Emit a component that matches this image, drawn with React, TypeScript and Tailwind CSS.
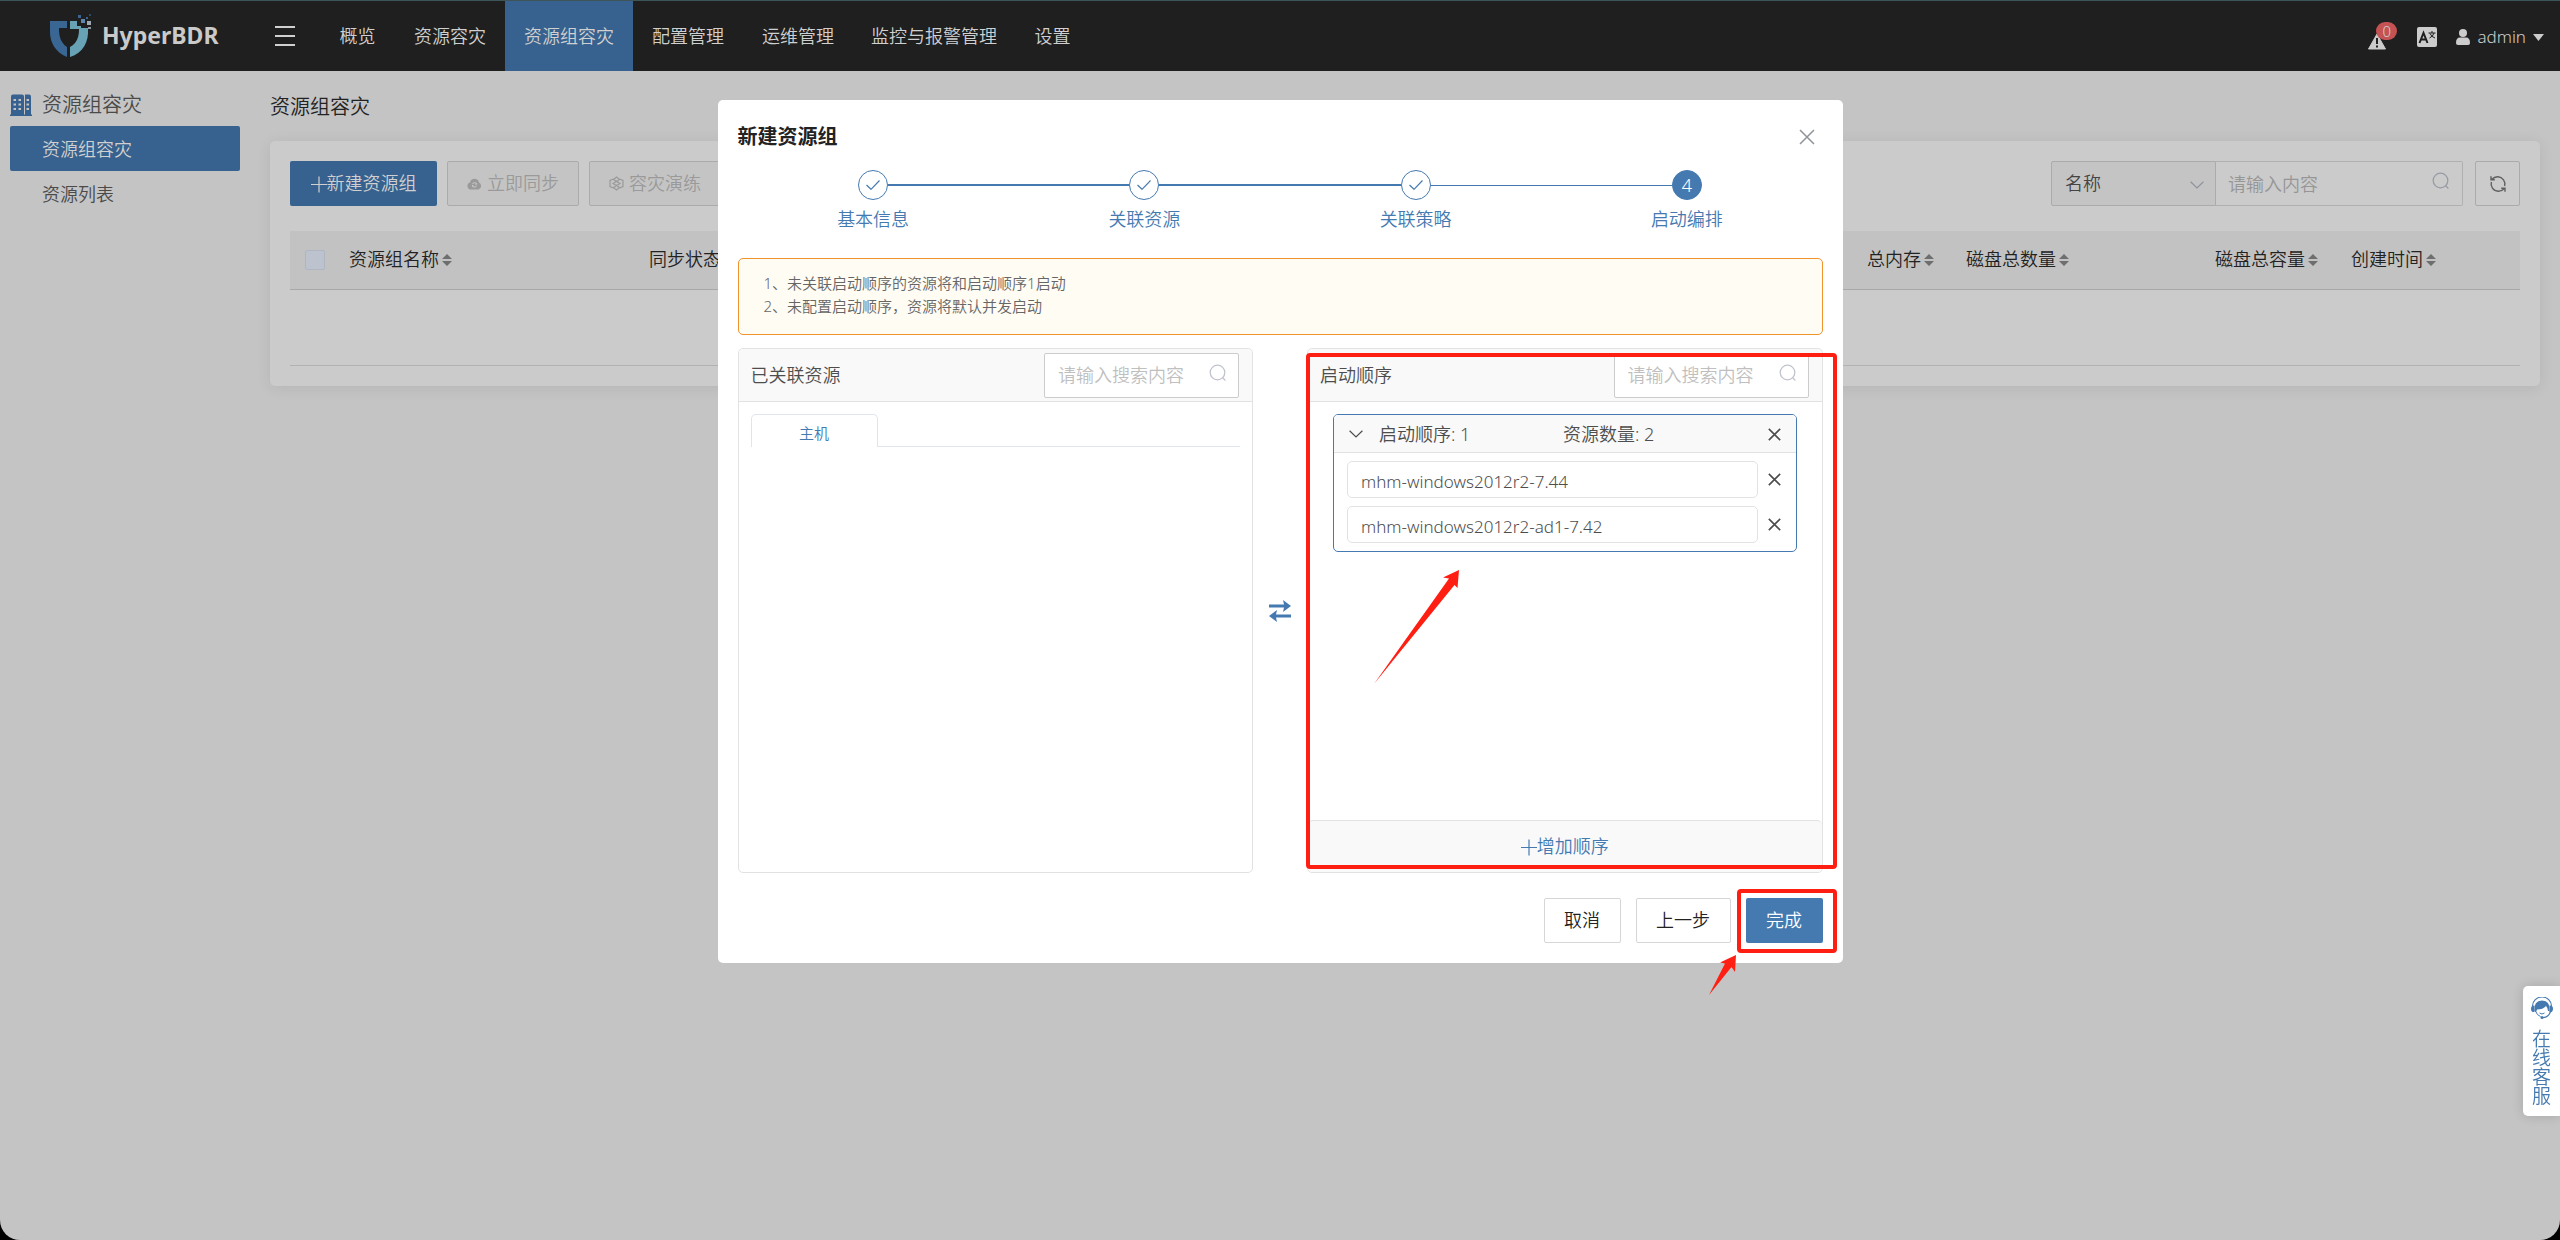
import React, { useState } from 'react';

const NAV_ITEMS = [
  { label: '概览', width: 'w-[75px]' },
  { label: '资源容灾', width: 'w-[110px]' },
  { label: '资源组容灾', width: 'w-[128px]', active: true },
  { label: '配置管理', width: 'w-[110px]' },
  { label: '运维管理', width: 'w-[110px]' },
  { label: '监控与报警管理', width: 'w-[162px]' },
  { label: '设置', width: 'w-[75px]' },
];

const STEPS = ['基本信息', '关联资源', '关联策略', '启动编排'];

const RESOURCES = ['mhm-windows2012r2-7.44', 'mhm-windows2012r2-ad1-7.42'];

interface IconProps {
  className?: string;
}

const LogoMark = () => (
  <svg className="h-[44px] w-[42px]" viewBox="0 0 42 44">
    <path d="M0 7H17V14H9C9 23 11 29 17 33V43C5 38 0 28 0 18Z" fill="#3a6694" />
    <path d="M20 7H27V12H31V14H38C39 28 33 39 20 43V33C27 29 29 23 29 15H20Z" fill="#68a3b5" />
    <path d="M31 5h4v4h-4z" fill="#5f87ad" />
    <path d="M28 1h3v3h-3z" fill="#3a6694" />
    <path d="M37 7h4v4h-4z" fill="#9fa9b3" />
    <path d="M36 3h2v2h-2z" fill="#3a6694" />
    <path d="M39 0h2v2h-2z" fill="#2c4a6a" />
    <path d="M38 13h3v2h-3z" fill="#8c979f" />
  </svg>
);

const SearchIcon = ({ className = '' }: IconProps) => (
  <svg className={`h-[18px] w-[18px] ${className}`} viewBox="0 0 18 18" fill="none" stroke="currentColor" strokeWidth="1.3">
    <circle cx="8.5" cy="8.5" r="7.3" />
    <path d="M13.8 13.8L16.4 16.6" />
  </svg>
);

const CloseIcon = ({ className = '' }: IconProps) => (
  <svg className={className} viewBox="0 0 16 16" fill="none" stroke="currentColor">
    <path d="M1 1L15 15M15 1L1 15" />
  </svg>
);

const ChevronIcon = ({ className = '' }: IconProps) => (
  <svg className={`h-[8px] w-[14px] ${className}`} viewBox="0 0 14 8" fill="none" stroke="currentColor" strokeWidth="1.2">
    <path d="M0.6 0.8L7 7L13.4 0.8" />
  </svg>
);

const PlusIcon = () => (
  <svg className="h-[18px] w-[16px]" viewBox="0 0 16 18" fill="none" stroke="currentColor" strokeWidth="1.2">
    <path d="M0 9.5H16M8 1.5V17.5" />
  </svg>
);

const SortIcon = () => (
  <svg className="h-[12px] w-[10px]" viewBox="0 0 10 12" fill="#6e6e6e">
    <path d="M0 5L5 0L10 5ZM0 7L5 12L10 7Z" />
  </svg>
);

const BuildingIcon = () => (
  <svg className="h-[22px] w-[22px]" viewBox="0 0 22 22">
    <path d="M0 20.5H1V2.5Q1 0.5 3 0.5H12Q14 0.5 14 2.5V20.5H15V0.5H19Q21 0.5 21 2.5V20.5H22V22H0Z" fill="#37618e" />
    <path
      d="M3.5 5h2.5v2h-2.5zM8.5 5h2.5v2h-2.5zM3.5 9.5h2.5v2h-2.5zM8.5 9.5h2.5v2h-2.5zM3.5 14h2.5v2h-2.5zM8.5 14h2.5v2h-2.5zM16.5 5h2.5v2h-2.5zM16.5 9.5h2.5v2h-2.5zM16.5 14h2.5v2h-2.5z"
      fill="#c4c4c4"
    />
  </svg>
);

const CloudSyncIcon = () => (
  <svg className="h-[15px] w-[15px]" viewBox="0 0 15 15">
    <path d="M3 6.5A4.6 4.6 0 0 1 12 6.5A3.8 3.8 0 0 1 11.5 13.5H3.5A3.6 3.6 0 0 1 3 6.5Z" fill="currentColor" />
    <path d="M5.4 8.2A2.3 2.3 0 0 1 9.4 7.7M9.6 9.6A2.3 2.3 0 0 1 5.6 10.1" fill="none" stroke="#cbcbcb" />
    <path d="M10 6.5V8.5H8ZM5 11.3V9.3H7Z" fill="#cbcbcb" />
  </svg>
);

const DrillIcon = () => (
  <svg className="h-[15px] w-[15px]" viewBox="0 0 15 15" fill="none" stroke="currentColor" strokeWidth="1.2">
    <path d="M4.5 3L1 4.5V10.5L4.5 12M10.5 3L14 4.5V10.5L10.5 12" />
    <path d="M4.5 3.5L7.5 1L10.5 3.5L7.5 5.5ZM4 7.5L7.5 5.5L11 7.5L7.5 9.5ZM4.5 11.5L7.5 9.5L10.5 11.5L7.5 14Z" />
  </svg>
);

const RefreshIcon = () => (
  <svg className="h-[18px] w-[18px]" viewBox="0 0 18 18" fill="none" stroke="currentColor" strokeWidth="1.4">
    <path d="M2 1.2V4.8H5.8M2.6 4.6Q5.5 1.6 9 1.8A7.2 7.2 0 0 1 15.6 11" />
    <path d="M16 16.8V13.2H12.2M15.4 13.4Q12.5 16.4 9 16.2A7.2 7.2 0 0 1 2.4 7" />
  </svg>
);

const TransferIcon = () => (
  <svg className="h-[22px] w-[22px]" viewBox="0 0 22 22" fill="currentColor">
    <path d="M0 4.5H15L14 0L22 6L14 12L15 7.5H0Z" />
    <path d="M22 14.5H7L8 10L0 16L8 22L7 17.5H22Z" />
  </svg>
);

const HeadsetIcon = () => (
  <svg className="h-[22px] w-[22px]" viewBox="0 0 22 22">
    <path d="M1.5 9A9.5 9 0 0 1 20.5 9" fill="none" stroke="#457ab1" strokeWidth="1.2" />
    <path d="M3.5 14Q2.5 3.5 11 3.5Q19.5 3.5 18.5 14L17 14Q17 11 15 9Q12 12.5 6 12.5L5 15Z" fill="#457ab1" />
    <path d="M3.5 8.5V15Q0 15.5 0 11.7Q0 8.5 3.5 8.5ZM18.5 8.5V15Q22 15.5 22 11.7Q22 8.5 18.5 8.5Z" fill="#457ab1" />
    <path d="M4.5 14Q6 18.5 9.5 19.5M8.5 16Q11 18 13.5 16" fill="none" stroke="#457ab1" />
    <path d="M19.5 14.5Q18 20 12 20.7" fill="none" stroke="#457ab1" strokeWidth="1.2" />
    <circle cx="11" cy="20.5" r="1.5" fill="#457ab1" />
  </svg>
);

const TopBar = () => (
  <header className="flex h-[70px] items-center bg-[#1f1f1f] text-[#d0d0d0]">
    <a href="#" className="ml-[50px] flex w-[225px] items-center gap-[10px]">
      <LogoMark />
      <span className="pb-[2px] font-['Noto_Sans',sans-serif] text-[23px] leading-[28px] font-bold text-[#cacaca]">HyperBDR</span>
    </a>
    <button type="button" aria-label="菜单" className="flex w-[20px] flex-col gap-[7px]">
      <span className="h-[2px] bg-[#d0d0d0]" />
      <span className="h-[2px] bg-[#d0d0d0]" />
      <span className="h-[2px] bg-[#d0d0d0]" />
    </button>
    <nav className="ml-[25px] flex h-full">
      {NAV_ITEMS.map((item) => (
        <a
          key={item.label}
          href="#"
          className={`flex h-full items-center justify-center pt-[1px] whitespace-nowrap ${item.width} ${item.active ? 'bg-[#37618e]' : ''}`}
        >
          {item.label}
        </a>
      ))}
    </nav>
    <div className="ml-auto flex items-center pt-[2px] pr-[16px]">
      <button type="button" aria-label="告警" className="relative mr-[31px]">
        <svg className="h-[30px] w-[18px]" viewBox="0 0 18 30">
          <path d="M9 12L17.5 27H0.5Z" fill="#cccccc" stroke="#cccccc" strokeLinejoin="round" />
          <path d="M9 16V22M9 23.5V25.5" stroke="#1f1f1f" strokeWidth="2" />
        </svg>
        <span className="absolute top-0 left-[8px] flex h-[18px] w-[21px] items-center justify-center rounded-full bg-[#c65353] text-[15px] leading-[18px]">
          0
        </span>
      </button>
      <button type="button" aria-label="语言" className="mr-[19px]">
        <svg className="h-[20px] w-[20px]" viewBox="0 0 20 20">
          <rect width="20" height="20" rx="2" fill="#cccccc" />
          <path d="M2.5 16L6.5 6L10.5 16M4 12.5H9" fill="none" stroke="#1f1f1f" strokeWidth="2" />
          <path d="M11.5 6H18.5M15 4V6M12.5 11Q16 9.5 17 6M13 6.5Q14.5 10 18 11" fill="none" stroke="#1f1f1f" />
        </svg>
      </button>
      <button type="button" className="flex items-center gap-[7px] text-[17px]">
        <svg className="h-[16px] w-[14px]" viewBox="0 0 14 16" fill="#cccccc">
          <circle cx="7" cy="4" r="4" />
          <path d="M0 14Q0 8.5 4 8.5H10Q14 8.5 14 14Q14 16 12 16H2Q0 16 0 14Z" />
        </svg>
        admin
        <svg className="h-[7px] w-[11px]" viewBox="0 0 11 7" fill="#cccccc">
          <path d="M0 0H11L5.5 7Z" />
        </svg>
      </button>
    </div>
  </header>
);

const Sidebar = () => (
  <aside className="w-[250px] shrink-0 pt-[19px] pl-[10px]">
    <div className="mb-[7px] flex h-[29px] items-center gap-[10px] text-[20px] text-[#4a4a4a]">
      <BuildingIcon />
      资源组容灾
    </div>
    <a href="#" className="flex h-[45px] w-[230px] items-center rounded-[2px] bg-[#37618e] pt-[1px] pl-[32px] text-[#d0d0d0]">
      资源组容灾
    </a>
    <a href="#" className="flex h-[45px] w-[230px] items-center pt-[1px] pl-[32px] text-[#4a4a4a]">
      资源列表
    </a>
  </aside>
);

const SortableHead = ({ label }: { label: string }) => (
  <th scope="col" className="pl-[15px] text-left font-[350]">
    <span className="flex items-center gap-[3px] whitespace-nowrap">
      {label}
      <SortIcon />
    </span>
  </th>
);

const GroupTable = () => (
  <table className="mt-[25px] w-full table-fixed border-collapse text-[#222222]">
    <colgroup>
      <col className="w-[44px]" />
      <col className="w-[300px]" />
      <col />
      <col className="w-[99px]" />
      <col className="w-[249px]" />
      <col className="w-[136px]" />
      <col className="w-[184px]" />
    </colgroup>
    <thead>
      <tr className="h-[58px] border-b border-[#a8a8a8] bg-[#c2c2c2]">
        <th scope="col" className="pl-[15px] text-left">
          <input
            type="checkbox"
            aria-label="全选"
            className="block h-[20px] w-[20px] appearance-none rounded-[2px] border border-[#b0b5c2] bg-[#bcc2ce]"
          />
        </th>
        <SortableHead label="资源组名称" />
        <SortableHead label="同步状态" />
        <SortableHead label="总内存" />
        <SortableHead label="磁盘总数量" />
        <SortableHead label="磁盘总容量" />
        <SortableHead label="创建时间" />
      </tr>
    </thead>
    <tbody>
      <tr className="h-[76px] border-b border-[#b2b2b2]">
        <td colSpan={7} />
      </tr>
    </tbody>
  </table>
);

const GroupPage = () => (
  <main className="min-w-0 flex-1 pt-[20px] pr-[20px] pl-[20px]">
    <h1 className="flex h-[32px] items-center text-[20px] text-[#222222]">资源组容灾</h1>
    <section className="mt-[18px] rounded-[5px] bg-[#cbcbcb] px-[20px] pt-[20px] pb-[20px] shadow-[0_2px_15px_rgba(0,0,0,0.08)]">
      <div className="flex">
        <button type="button" className="flex h-[45px] w-[147px] items-center justify-center rounded-[2px] bg-[#37618e] text-[#d0d0d0]">
          <PlusIcon />
          新建资源组
        </button>
        <button
          type="button"
          disabled
          className="ml-[10px] flex h-[45px] w-[132px] items-center justify-center gap-[5px] rounded-[2px] border border-[#ababab] bg-[#c4c4c4] text-[#9a9a9a]"
        >
          <CloudSyncIcon />
          立即同步
        </button>
        <button
          type="button"
          disabled
          className="ml-[10px] flex h-[45px] w-[132px] items-center justify-center gap-[5px] rounded-[2px] border border-[#ababab] bg-[#c4c4c4] text-[#9a9a9a]"
        >
          <DrillIcon />
          容灾演练
        </button>
        <div className="relative ml-auto">
          <select
            aria-label="搜索字段"
            className="h-[45px] w-[165px] appearance-none rounded-l-[2px] border border-[#ababab] bg-[#c4c4c4] pl-[13px] text-[#444444]"
          >
            <option>名称</option>
          </select>
          <ChevronIcon className="pointer-events-none absolute top-[20px] right-[12px] text-[#8e929a]" />
        </div>
        <div className="relative">
          <input
            type="text"
            aria-label="搜索内容"
            placeholder="请输入内容"
            className="h-[45px] w-[247px] rounded-r-[2px] border border-l-0 border-[#b0b0b0] pl-[12px] placeholder:text-[#969696]"
          />
          <SearchIcon className="pointer-events-none absolute top-[11px] right-[13px] text-[#979ba3]" />
        </div>
        <button
          type="button"
          aria-label="刷新"
          className="ml-[12px] flex h-[45px] w-[45px] items-center justify-center rounded-[2px] border border-[#ababab] text-[#606060]"
        >
          <RefreshIcon />
        </button>
      </div>
      <GroupTable />
    </section>
  </main>
);

const StepBar = () => (
  <ol className="mt-[17px] grid grid-cols-4 text-[#457ab1]">
    {STEPS.map((step, index) => {
      const current = index === STEPS.length - 1;
      return (
        <li key={step} className="flex flex-col items-center">
          <div className="flex w-full items-center">
            <span className={`flex-1 ${index === 0 ? '' : current ? 'h-[1px] bg-[#457ab1]' : 'h-[2px] bg-[#457ab1]'}`} />
            <span
              className={`flex h-[30px] w-[30px] items-center justify-center rounded-full border border-[#457ab1] ${
                current ? 'bg-[#457ab1] text-white' : ''
              }`}
            >
              {current ? (
                index + 1
              ) : (
                <svg className="h-[10px] w-[14px]" viewBox="0 0 14 10" fill="none" stroke="currentColor" strokeWidth="1.2">
                  <path d="M0.5 5L5 9.3L13.5 0.5" />
                </svg>
              )}
            </span>
            <span className={`flex-1 ${current ? '' : index === 2 ? 'h-[1px] bg-[#457ab1]' : 'h-[2px] bg-[#457ab1]'}`} />
          </div>
          <span className="mt-[4px] leading-[30px]">{step}</span>
        </li>
      );
    })}
  </ol>
);

const PanelHeader = ({ title }: { title: string }) => (
  <div className="flex h-[53px] shrink-0 items-center justify-between rounded-t-[5px] border-b border-[#e2e2e2] bg-[#f9f9f9] pr-[13px] pl-[12px]">
    <h3>{title}</h3>
    <div className="relative">
      <input
        type="text"
        aria-label={`搜索${title}`}
        placeholder="请输入搜索内容"
        className="block h-[45px] w-[195px] rounded-[2px] border border-[#cccccc] bg-white pr-[40px] pl-[13px] placeholder:text-[#bfbfbf]"
      />
      <SearchIcon className="pointer-events-none absolute top-[11px] right-[12px] text-[#c0c4cc]" />
    </div>
  </div>
);

const LinkedPanel = () => (
  <section className="flex h-[525px] flex-1 flex-col rounded-[5px] border border-[#e2e2e2]">
    <PanelHeader title="已关联资源" />
    <div role="tablist" className="mx-[12px] mt-[12px] flex h-[33px]">
      <button
        type="button"
        role="tab"
        aria-selected="true"
        className="w-[127px] rounded-t-[5px] border border-b-0 border-[#e0e4ec] pt-[5px] text-[15px] text-[#457ab1]"
      >
        主机
      </button>
      <div className="flex-1 border-b border-[#e0e4ec]" />
    </div>
  </section>
);

const OrderPanel = () => {
  const [resources, setResources] = useState(RESOURCES);

  return (
    <section className="relative flex h-[525px] flex-1 flex-col rounded-[5px] border border-[#e2e2e2]">
      <PanelHeader title="启动顺序" />
      <div className="mt-[12px] mr-[25px] ml-[25px] overflow-hidden rounded-[5px] border border-[#457ab1]">
        <div className="flex h-[38px] items-center border-b border-[#e2e2e2] bg-[#f9f9f9] pt-[1px] pr-[15px] pl-[15px]">
          <ChevronIcon />
          <span className="ml-[16px] w-[184px]">启动顺序: 1</span>
          <span>资源数量: {resources.length}</span>
          <button type="button" aria-label="删除顺序" className="ml-auto">
            <CloseIcon className="h-[13px] w-[13px] stroke-[2]" />
          </button>
        </div>
        <ul className="flex flex-col gap-[8px] py-[8px] pr-[15px] pl-[13px]">
          {resources.map((name) => (
            <li key={name} className="flex items-center">
              <span className="flex h-[37px] w-[411px] items-center rounded-[5px] border border-[#e2e2e2] pt-[4px] pl-[13px] text-[17px]">
                {name}
              </span>
              <button
                type="button"
                aria-label={`移除 ${name}`}
                className="ml-auto"
                onClick={() => setResources(resources.filter((item) => item !== name))}
              >
                <CloseIcon className="h-[13px] w-[13px] stroke-[2]" />
              </button>
            </li>
          ))}
        </ul>
      </div>
      <button
        type="button"
        className="mt-auto flex h-[52px] items-center justify-center rounded-[5px] border-t border-[#e2e2e2] bg-[#f9f9f9] text-[#457ab1]"
      >
        <PlusIcon />
        增加顺序
      </button>

      {/* Highlight frame and pointer over the order list */}
      <div className="pointer-events-none absolute top-[4px] -right-[15px] -left-[2px] h-[516px] rounded-[4px] border-4 border-[#ff1e12]" />
      <svg className="pointer-events-none absolute top-[220px] left-[64px] h-[116px] w-[88px]" viewBox="0 0 88 116" fill="#ff1e12">
        <path d="M87 1L71 8.5L77 9.5L2 115L82.5 16L85.5 19Z" />
      </svg>
    </section>
  );
};

const NewGroupDialog = () => (
  <div
    role="dialog"
    aria-labelledby="dialog-title"
    className="w-[1125px] rounded-[5px] bg-white p-[20px] text-[#4d4d4d]"
  >
    <div className="flex h-[33px] items-center justify-between pr-[8px]">
      <h2 id="dialog-title" className="text-[20px] font-bold text-[#222222]">
        新建资源组
      </h2>
      <button type="button" aria-label="关闭" className="text-[#909399]">
        <CloseIcon className="h-[16px] w-[16px] stroke-[1.5]" />
      </button>
    </div>
    <StepBar />
    <div className="mt-[24px] h-[77px] rounded-[5px] border border-[#f0932b] bg-[#fffcf4] px-[25px] pt-[13px] text-[15px] leading-[23px] text-[#666666]">
      <p>1、未关联启动顺序的资源将和启动顺序1启动</p>
      <p>2、未配置启动顺序，资源将默认并发启动</p>
    </div>
    <div className="mt-[13px] flex items-center">
      <LinkedPanel />
      <button type="button" aria-label="移动" className="flex w-[54px] justify-center text-[#457ab1]">
        <TransferIcon />
      </button>
      <OrderPanel />
    </div>
    <div className="mt-[25px] flex justify-end gap-[15px] text-[#222222]">
      <button type="button" className="h-[45px] w-[77px] rounded-[2px] border border-[#d6d6d6]">
        取消
      </button>
      <button type="button" className="h-[45px] w-[95px] rounded-[2px] border border-[#d6d6d6]">
        上一步
      </button>
      <div className="relative">
        <button type="button" className="h-[45px] w-[77px] rounded-[2px] bg-[#457ab1] text-white">
          完成
        </button>
        <div className="pointer-events-none absolute -top-[9px] -left-[9px] h-[64px] w-[100px] rounded-[4px] border-4 border-[#ff1e12]" />
        <svg className="pointer-events-none absolute top-[57px] -left-[37px] h-[40px] w-[27px]" viewBox="0 0 27 40" fill="#ff1e12">
          <path d="M27 0L11 7.5L16 8.5L0 40L22.5 12L26 17Z" />
        </svg>
      </div>
    </div>
  </div>
);

const SupportTab = () => (
  <a
    href="#"
    className="fixed top-[986px] right-0 flex h-[130px] w-[37px] flex-col items-center rounded-l-[5px] bg-white pt-[11px] text-[19px] leading-[19px] text-[#457ab1] shadow-[0_0_12px_rgba(0,0,0,0.15)]"
  >
    <HeadsetIcon />
    <span className="mt-[11px] w-[19px] break-all">在线客服</span>
  </a>
);

const App: React.FC = () => (
  <div className="min-h-screen bg-black font-['Noto_Sans','Noto_Sans_CJK_SC',sans-serif] text-[18px] font-[350]">
    <div className="min-h-screen overflow-hidden rounded-b-[20px] border-t border-[#3d5558] bg-[#c4c4c4]">
      <TopBar />
      <div className="flex">
        <Sidebar />
        <GroupPage />
      </div>
    </div>
    <div className="fixed inset-x-0 top-[100px] flex justify-center">
      <NewGroupDialog />
    </div>
    <SupportTab />
  </div>
);

export default App;
